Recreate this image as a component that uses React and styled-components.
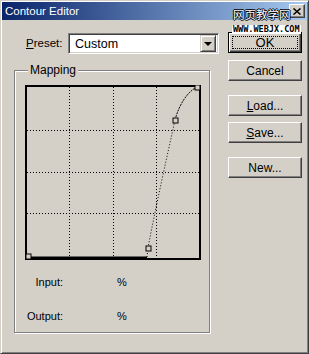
import React from "react";
import styled, { createGlobalStyle } from "styled-components";

const Global = createGlobalStyle`
  html, body { margin: 0; padding: 0; background: #d4d0c8; }
  body { font-family: "Liberation Sans", Arial, sans-serif; font-size: 11px; color: #000; }
`;

const Window = styled.div`
  position: relative;
  width: 309px;
  height: 354px;
  box-sizing: border-box;
  background: #d4d0c8;
  border: 1px solid;
  border-color: #d4d0c8 #404040 #404040 #d4d0c8;
  box-shadow: inset 1px 1px 0 #ffffff, inset -1px -1px 0 #808080;
  padding: 1px;
`;

const TitleBar = styled.div`
  height: 18px;
  display: flex;
  align-items: center;
  justify-content: space-between;
  padding: 0 2px 0 3px;
  background: linear-gradient(to right, #0a246a, #a6caf0);
`;

const TitleText = styled.span`
  color: #fff;
  font-size: 11.5px;
  line-height: 13px;
`;

const CloseButton = styled.div`
  width: 16px;
  height: 14px;
  box-sizing: border-box;
  background: #d4d0c8;
  border: 1px solid;
  border-color: #fff #404040 #404040 #fff;
  box-shadow: inset -1px -1px 0 #808080;
  display: flex;
  align-items: center;
  justify-content: center;
`;

const Body = styled.div`
  display: flex;
  padding-left: 12px;
`;

const LeftColumn = styled.div`
  width: 205px;
  display: flex;
  flex-direction: column;
`;

const PresetRow = styled.div`
  margin-top: 13px;
  display: flex;
  align-items: center;
  padding-left: 12px;
`;

const Label = styled.span`
  width: 42px;
  line-height: 13px;
  font-size: 11.5px;
`;

const Select = styled.div`
  width: 151px;
  height: 21px;
  box-sizing: border-box;
  background: #fff;
  border: 1px solid;
  border-color: #808080 #fff #fff #808080;
  box-shadow: inset 1px 1px 0 #404040, inset -1px -1px 0 #d4d0c8;
  display: flex;
  align-items: center;
  justify-content: space-between;
  padding: 2px;
`;

const SelectValue = styled.span`
  padding-left: 4px;
  font-size: 12.5px;
  line-height: 14px;
`;

const DropButton = styled.div`
  width: 16px;
  height: 17px;
  box-sizing: border-box;
  background: #d4d0c8;
  border: 1px solid;
  border-color: #d4d0c8 #404040 #404040 #d4d0c8;
  box-shadow: inset 1px 1px 0 #fff, inset -1px -1px 0 #808080;
  display: flex;
  align-items: center;
  justify-content: center;
`;

const Arrow = styled.div`
  width: 0;
  height: 0;
  border-left: 4px solid transparent;
  border-right: 4px solid transparent;
  border-top: 4px solid #000;
  margin-top: 1px;
`;

const Group = styled.fieldset`
  margin: 10px 0 0 0;
  width: 196px;
  box-sizing: border-box;
  min-width: 0;
  border: 1px solid #808080;
  box-shadow: 1px 1px 0 #fff, inset 1px 1px 0 #fff;
  padding: 8px 0 9px 10px;
`;

const Legend = styled.legend`
  margin-left: 3px;
  padding: 0 2px;
  background: #d4d0c8;
  font-size: 12px;
  line-height: 13px;
`;

const Graph = styled.svg`
  display: block;
  width: 176px;
  height: 175px;
`;

const ValueGrid = styled.div`
  margin-top: 16px;
  display: grid;
  grid-template-columns: 38px 54px auto;
  row-gap: 21px;
  line-height: 13px;
`;

const ValueLabel = styled.span`
  text-align: right;
`;

const Percent = styled.span`
  grid-column: 3;
`;

const ButtonColumn = styled.div`
  margin-left: 9px;
  padding-top: 12px;
  display: flex;
  flex-direction: column;
`;

const Button = styled.div`
  margin-top: ${(p) => p.$gap || 0}px;
  width: 74px;
  height: 21px;
  box-sizing: border-box;
  background: #d4d0c8;
  border: 1px solid;
  border-color: ${(p) => (p.$default ? "#000" : "#fff #404040 #404040 #fff")};
  box-shadow: ${(p) =>
    p.$default
      ? "inset 1px 1px 0 #fff, inset -1px -1px 0 #404040, inset -2px -2px 0 #808080"
      : "inset -1px -1px 0 #808080"};
  display: flex;
  align-items: center;
  justify-content: center;
  padding: 3px;
  font-size: 12px;
`;

const Focus = styled.span`
  flex: 1;
  align-self: stretch;
  display: flex;
  align-items: center;
  justify-content: center;
  outline: 1px dotted #000;
  outline-offset: -1px;
  font-size: 13px;
`;

const Watermark = styled.div`
  position: absolute;
  left: 231px;
  top: 7px;
  display: flex;
  flex-direction: column;
  align-items: flex-start;
  pointer-events: none;
`;

const WmTitle = styled.span`
  font-family: "Noto Sans CJK SC", sans-serif;
  font-size: 11.5px;
  line-height: 13px;
  color: #fff;
  padding-left: 1px;
  text-shadow: 1px 0 0 #000, -1px 0 0 #000, 0 1px 0 #000, 0 -1px 0 #000;
`;

const WmUrl = styled.span`
  margin-top: 4px;
  font-family: "DejaVu Sans Mono", monospace;
  font-weight: bold;
  font-size: 8.5px;
  line-height: 8px;
  color: #000;
  background: #fff;
  padding: 0 1px;
`;

const Handle = ({ x, y }) => (
  <rect x={x - 2.5} y={y - 2.5} width="5" height="5" fill="#d4d0c8" stroke="#000" strokeWidth="1" />
);

const ContourGraph = () => {
  const gx = [44, 88, 131];
  const gy = [45, 87, 128];
  return (
    <Graph viewBox="0 0 176 175">
      <rect x="1" y="1" width="174" height="173" fill="#d4d0c8" stroke="#000" strokeWidth="2" />
      {gx.map((x) => (
        <line key={"x" + x} x1={x + 0.5} y1="2" x2={x + 0.5} y2="173" stroke="#000" strokeWidth="1" strokeDasharray="1 2" />
      ))}
      {gy.map((y) => (
        <line key={"y" + y} x1="2" y1={y + 0.5} x2="174" y2={y + 0.5} stroke="#000" strokeWidth="1" strokeDasharray="1 2" />
      ))}
      <line x1="2" y1="172.5" x2="122" y2="172.5" stroke="#000" strokeWidth="2" />
      <path d="M122 172 L123 163 C131 120 142 72 150 35" fill="none" stroke="#000" strokeWidth="1" strokeDasharray="1 2" />
      <path d="M150 35 C154 20 162 7 172 2" fill="none" stroke="#000" strokeWidth="1" strokeDasharray="2 1" />
      <Handle x={3.5} y={171.5} />
      <Handle x={123.5} y={163.5} />
      <Handle x={150.5} y={35.5} />
      <Handle x={172.5} y={2.5} />
    </Graph>
  );
};

export default function App() {
  return (
    <>
      <Global />
      <Window>
        <TitleBar>
          <TitleText>Contour Editor</TitleText>
          <CloseButton>
            <svg width="8" height="7" viewBox="0 0 8 7">
              <path d="M0.5 0.5 L7.5 6.5 M7.5 0.5 L0.5 6.5" stroke="#000" strokeWidth="1.5" />
            </svg>
          </CloseButton>
        </TitleBar>
        <Body>
          <LeftColumn>
            <PresetRow>
              <Label>
                <u>P</u>reset:
              </Label>
              <Select>
                <SelectValue>Custom</SelectValue>
                <DropButton>
                  <Arrow />
                </DropButton>
              </Select>
            </PresetRow>
            <Group>
              <Legend>Mapping</Legend>
              <ContourGraph />
              <ValueGrid>
                <ValueLabel>Input:</ValueLabel>
                <Percent>%</Percent>
                <ValueLabel>Output:</ValueLabel>
                <Percent>%</Percent>
              </ValueGrid>
            </Group>
          </LeftColumn>
          <ButtonColumn>
            <Button $default>
              <Focus>OK</Focus>
            </Button>
            <Button $gap={7}>Cancel</Button>
            <Button $gap={14}>
              <span>
                <u>L</u>oad...
              </span>
            </Button>
            <Button $gap={6}>
              <span>
                <u>S</u>ave...
              </span>
            </Button>
            <Button $gap={14}>New...</Button>
          </ButtonColumn>
        </Body>
        <Watermark>
          <WmTitle>网页教学网</WmTitle>
          <WmUrl>WWW.WEBJX.COM</WmUrl>
        </Watermark>
      </Window>
    </>
  );
}
